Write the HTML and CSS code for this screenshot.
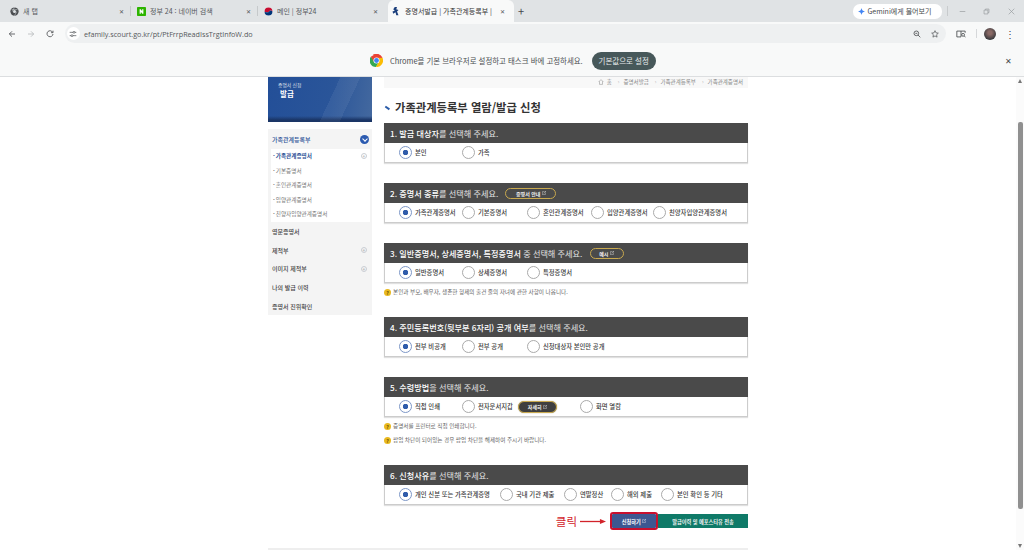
FILE: index.html
```html
<!DOCTYPE html>
<html lang="ko">
<head>
    <meta charset="UTF-8">
    <title>증명서발급 | 가족관계등록부</title>
    <link rel="stylesheet" href="styles.css">
</head>
<body>

    <div class="tabstrip">
        <div class="tab tab-sep">
            <svg class="favicon" viewBox="0 0 12 12"><circle cx="6" cy="6" r="5.5" fill="#4a4d50"/><circle cx="6" cy="6" r="2" fill="#dfe3e5"/><path d="M2 3.500h8M6 .5 3 6m3 5.500L9 6" stroke="#dfe3e5" stroke-width=".7" fill="none"/></svg>
            <span class="tab-title">새 탭</span>
            <span class="tab-close">✕</span>
        </div>
        <div class="tab tab-sep">
            <svg class="favicon" viewBox="0 0 12 12"><rect width="12" height="12" rx="1" fill="#2db400"/><path d="M3.500 3v6h1.600V6.200L7 9h1.500V3H6.900v2.800L5 3z" fill="#fff"/></svg>
            <span class="tab-title">정부 24 : 네이버 검색</span>
            <span class="tab-close">✕</span>
        </div>
        <div class="tab">
            <svg class="favicon" viewBox="0 0 12 12"><circle cx="6" cy="6" r="5.500" fill="#fff"/><path d="M.7 6a5.300 5.300 0 0 1 10.600 0c-1.500-2-3.500-1.500-4.500 0S2.500 7.500.7 6z" fill="#c60c30"/><path d="M.7 6c1.800 1.500 5.100 1.500 6.100 0s3-2 4.500 0A5.300 5.300 0 0 1 .7 6z" fill="#003478"/></svg>
            <span class="tab-title">메인 | 정부24</span>
            <span class="tab-close">✕</span>
        </div>
        <div class="tab tab-active">
            <svg class="favicon" viewBox="0 0 12 12"><path d="M5 0h3L7 3l3 1-2 2 2 5H7L6 7 3 9 2 6l3-1-2-2z" fill="#1c3f7c"/></svg>
            <span class="tab-title">증명서발급 | 가족관계등록부 |</span>
            <span class="tab-close">✕</span>
        </div>
        <span class="new-tab">+</span>
        <div class="tabstrip-right">
            <div class="gemini">
                <svg class="gemini-star" viewBox="0 0 12 12"><path d="M6 0c.5 3.500 2.500 5.500 6 6-3.500.5-5.500 2.500-6 6-.5-3.500-2.500-5.500-6-6 3.500-.5 5.500-2.500 6-6z" fill="#4285f4"/></svg>
                <span>Gemini에게 물어보기</span>
            </div>
            <span class="strip-divider"></span>
            <div class="window-buttons">
                <svg viewBox="0 0 10 10"><path d="M1 5h8" stroke="#9a9da0" fill="none"/></svg>
                <svg viewBox="0 0 10 10"><path d="M1.500 3h5.500v5.500H1.500zM3.500 3V1.500h5v5H7" stroke="#9a9da0" fill="none"/></svg>
                <svg viewBox="0 0 10 10"><path d="m1 1 8 8m0-8-8 8" stroke="#9a9da0" fill="none"/></svg>
            </div>
        </div>
    </div>

    <div class="toolbar">
        <svg class="nav-icon" viewBox="0 0 12 12"><path d="M10.500 6H2M6 2 2 6l4 4" stroke="#45484b" stroke-width="1.200" fill="none"/></svg>
        <svg class="nav-icon" viewBox="0 0 12 12"><path d="M1.500 6H10M6 2l4 4-4 4" stroke="#b4b7ba" stroke-width="1.200" fill="none"/></svg>
        <svg class="nav-icon" viewBox="0 0 12 12"><path d="M10 3.500A4.500 4.500 0 1 0 10.500 6M10.500 1v3h-3" stroke="#45484b" stroke-width="1.200" fill="none"/></svg>
        <div class="omnibox">
            <span class="site-info">
                <svg viewBox="0 0 12 12"><path d="M1 3.500h5M9 3.500h2M1 8.500h2M6 8.500h5" stroke="#45484b" fill="none"/><circle cx="7.500" cy="3.500" r="1.400" stroke="#45484b" fill="none"/><circle cx="4.500" cy="8.500" r="1.400" stroke="#45484b" fill="none"/></svg>
            </span>
            <span class="url">efamily.scourt.go.kr/pt/PtFrrpReadIssTrgtInfoW.do</span>
            <svg class="omni-icon" viewBox="0 0 12 12"><circle cx="5" cy="5" r="3.500" stroke="#45484b" stroke-width="1.200" fill="none"/><path d="m7.500 7.500 3.500 3.500M3.500 5h3" stroke="#45484b" stroke-width="1.200" fill="none"/></svg>
            <svg class="omni-icon" viewBox="0 0 12 12"><path d="m6 1 1.500 3.300 3.500.4-2.600 2.400.7 3.600L6 8.900l-3.100 1.800.7-3.600L1 4.700l3.500-.4z" stroke="#45484b" fill="none"/></svg>
        </div>
        <svg class="tool-icon" viewBox="0 0 12 12"><path d="M6 2.500H1v7h5M6 2.500h5v2M6 2.500v7" stroke="#45484b" fill="none"/><circle cx="8.500" cy="7" r="1.700" stroke="#45484b" fill="none"/><path d="m10 8.500 1.500 1.500" stroke="#45484b"/></svg>
        <span class="tool-divider"></span>
        <span class="avatar"></span>
        <span class="kebab">⋮</span>
    </div>

    <div class="infobar">
        <div class="infobar-center">
            <svg class="chrome-logo" viewBox="0 0 24 24">
                <path d="M12 12 5.500 1.500A12 12 0 0 1 23 7H12z" fill="#ea4335"/>
                <path d="M1.500 5A12 12 0 0 0 11 24l5-8-4-4z" fill="#34a853"/>
                <path d="M23 7a12 12 0 0 1-12 17l5.500-9.500L12 7z" fill="#fbbc05"/>
                <path d="M12 2a12 12 0 0 0-10.500 3L7 14l5-7h11a12 12 0 0 0-11-5z" fill="#ea4335"/>
                <circle cx="12" cy="12" r="5.600" fill="#fff"/>
                <circle cx="12" cy="12" r="4.400" fill="#4285f4"/>
            </svg>
            <span class="infobar-text">Chrome을 기본 브라우저로 설정하고 태스크 바에 고정하세요.</span>
            <span class="infobar-btn">기본값으로 설정</span>
        </div>
        <span class="infobar-close">✕</span>
    </div>

    <div class="viewport">
        <div class="page">
            <div class="sidebar">
                <div class="banner">
                    <span class="banner-small">증명서 신청</span>
                    <span class="banner-big">발급</span>
                </div>
                <div class="side-menu">
                    <div class="side-item side-open">가족관계등록부<span class="side-toggle"></span></div>
                    <div class="side-sub">
                        <div class="sub-item sub-current">가족관계증명서<span class="plus">+</span></div>
                        <div class="sub-item">기본증명서</div>
                        <div class="sub-item">혼인관계증명서</div>
                        <div class="sub-item">입양관계증명서</div>
                        <div class="sub-item">친양자입양관계증명서</div>
                    </div>
                    <div class="side-item">영문증명서</div>
                    <div class="side-item">제적부<span class="plus">+</span></div>
                    <div class="side-item">이미지 제적부<span class="plus">+</span></div>
                    <div class="side-item">나의 발급 이력</div>
                    <div class="side-item">증명서 진위확인</div>
                </div>
            </div>

            <div class="content">
                <div class="breadcrumb">
                    <svg class="home-icon" viewBox="0 0 10 10"><path d="M1 5 5 1l4 4M2.500 4v5h5V4" stroke="#999" fill="none"/></svg>
                    <span>홈</span>
                    <span class="crumb">증명서발급</span>
                    <span class="crumb">가족관계등록부</span>
                    <span class="crumb">가족관계증명서</span>
                </div>
                <h1 class="page-title"><span class="title-mark"></span>가족관계등록부 열람/발급 신청</h1>

                <section class="step step-1">
                    <h2 class="step-head"><b>1. 발급 대상자</b>를 선택해 주세요.</h2>
                    <div class="options">
                        <label class="opt w1 on">본인</label>
                        <label class="opt">가족</label>
                    </div>
                </section>

                <section class="step step-2">
                    <h2 class="step-head"><b>2. 증명서 종류</b>를 선택해 주세요. <span class="pill">증명서 안내<svg class="ext" viewBox="0 0 6 6"><path d="M3 1H.5v4.500H5V3M2.500 3.500 5.500.5M3.500.5h2v2" stroke="currentColor" stroke-width=".6" fill="none"/></svg></span></h2>
                    <div class="options">
                        <label class="opt wa on">가족관계증명서</label>
                        <label class="opt wb">기본증명서</label>
                        <label class="opt wc">혼인관계증명서</label>
                        <label class="opt wd">입양관계증명서</label>
                        <label class="opt">친양자입양관계증명서</label>
                    </div>
                </section>

                <section class="step step-3">
                    <h2 class="step-head"><b>3. 일반증명서, 상세증명서, 특정증명서</b> 중 선택해 주세요. <span class="pill pill-small">예시<svg class="ext" viewBox="0 0 6 6"><path d="M3 1H.5v4.500H5V3M2.500 3.500 5.500.5M3.500.5h2v2" stroke="currentColor" stroke-width=".6" fill="none"/></svg></span></h2>
                    <div class="options">
                        <label class="opt w1 on">일반증명서</label>
                        <label class="opt w2">상세증명서</label>
                        <label class="opt">특정증명서</label>
                    </div>
                </section>
                <p class="note">본인과 부모, 배우자, 생존한 형제의 출건 줄의 자녀에 관한 사항이 나옵니다.</p>

                <section class="step step-4">
                    <h2 class="step-head"><b>4. 주민등록번호(뒷부분 6자리) 공개 여부</b>를 선택해 주세요.</h2>
                    <div class="options">
                        <label class="opt w1 on">전부 비공개</label>
                        <label class="opt w2">전부 공개</label>
                        <label class="opt">신청대상자 본인만 공개</label>
                    </div>
                </section>

                <section class="step step-5">
                    <h2 class="step-head"><b>5. 수령방법</b>을 선택해 주세요.</h2>
                    <div class="options">
                        <label class="opt w1 on">직접 인쇄</label>
                        <label class="opt we">전자문서지갑</label>
                        <span class="pill pill-dark">자세히<svg class="ext" viewBox="0 0 6 6"><path d="M3 1H.5v4.500H5V3M2.500 3.500 5.500.5M3.500.5h2v2" stroke="currentColor" stroke-width=".6" fill="none"/></svg></span>
                        <label class="opt">화면 열람</label>
                    </div>
                </section>
                <p class="note">증명서를 프린터로 직접 인쇄합니다.</p>
                <p class="note">팝업 차단이 되어있는 경우 팝업 차단을 해제하여 주시기 바랍니다.</p>

                <section class="step step-6">
                    <h2 class="step-head"><b>6. 신청사유</b>를 선택해 주세요.</h2>
                    <div class="options">
                        <label class="opt on wf">개인 신분 또는 가족관계증명</label>
                        <label class="opt wg">국내 기관 제출</label>
                        <label class="opt wh">연말정산</label>
                        <label class="opt wi">해외 제출</label>
                        <label class="opt">본인 확인 등 기타</label>
                    </div>
                </section>

                <div class="actions">
                    <span class="click-label">클릭</span>
                    <svg class="click-arrow" viewBox="0 0 30 8"><path d="M0 4h24" stroke="#d2232a" stroke-width="1.500"/><path d="m23 1 7 3-7 3z" fill="#d2232a"/></svg>
                    <span class="btn-apply">신청하기<svg class="ext" viewBox="0 0 6 6"><path d="M3 1H.5v4.500H5V3M2.500 3.500 5.500.5M3.500.5h2v2" stroke="currentColor" stroke-width=".6" fill="none"/></svg></span>
                    <span class="btn-send">발급이력 및 에포스티유 전송</span>
                </div>
            </div>
        </div>
        <div class="footer-line"></div>
        <div class="scrollbar">
            <span class="scroll-up"></span>
            <span class="scroll-thumb"></span>
            <span class="scroll-down"></span>
        </div>
    </div>

</body>
</html>
```

FILE: styles.css
```css
* {
    box-sizing: border-box;
}
html, body {
    margin: 0;
    width: 1024px;
    height: 550px;
    overflow: hidden;
}
body {
    font-family: "Noto Sans CJK KR", "Noto Sans", sans-serif;
    color: #333;
    background: #fff;
}

/* browser chrome */
.tabstrip {
    height: 22px;
    background: #e0e3e5;
    display: flex;
    align-items: center;
    padding-left: 3px;
}
.tab {
    width: 127px;
    height: 22px;
    display: flex;
    align-items: center;
    gap: 4px;
    padding: 0 6px 0 7px;
    font-size: 7px;
    color: #55585b;
    position: relative;
}
.tab-sep::after {
    content: "";
    position: absolute;
    right: -1px;
    top: 6px;
    width: 1px;
    height: 10px;
    background: #c6c9cb;
}
.tab-active {
    width: 126px;
    margin-left: 4px;
    padding: 0 9px 0 3px;
    gap: 5px;
    background: #f8f9f9;
    border-radius: 6px 6px 0 0;
    color: #333;
}
.favicon {
    width: 9px;
    height: 9px;
    flex: none;
}
.tab-title {
    flex: 1;
    white-space: nowrap;
    overflow: hidden;
}
.tab-close {
    font-size: 6px;
    color: #55585b;
}
.new-tab {
    margin-left: 4px;
    font-size: 11px;
    color: #45484b;
}
.tabstrip-right {
    margin-left: auto;
    display: flex;
    align-items: center;
}
.gemini {
    width: 89px;
    height: 15px;
    background: #fff;
    border-radius: 7px;
    display: flex;
    align-items: center;
    gap: 3px;
    padding-left: 5px;
    font-size: 7px;
    color: #45484b;
    white-space: nowrap;
}
.gemini-star {
    width: 7px;
    height: 7px;
}
.strip-divider {
    width: 1px;
    height: 10px;
    background: #c8cbcd;
    margin: 0 11px 0 5px;
}
.window-buttons {
    display: flex;
    gap: 17.500px;
    padding-right: 9.500px;
}
.window-buttons svg {
    width: 7px;
    height: 7px;
}
.toolbar {
    height: 23px;
    background: #f8f9f9;
    display: flex;
    align-items: center;
    padding-left: 8px;
}
.nav-icon {
    width: 8px;
    height: 8px;
    margin-right: 11px;
}
.omnibox {
    flex: 1;
    height: 19px;
    background: #eef0f1;
    border-radius: 10px;
    display: flex;
    align-items: center;
    padding-left: 1.500px;
}
.site-info {
    width: 13px;
    height: 13px;
    background: #fff;
    border-radius: 50%;
    display: flex;
    align-items: center;
    justify-content: center;
}
.site-info svg {
    width: 8px;
    height: 8px;
}
.url {
    margin-left: 4.500px;
    font-family: "Open Sans", sans-serif;
    font-size: 7.200px;
    color: #55585b;
    flex: 1;
}
.omni-icon {
    width: 8px;
    height: 8px;
    margin: 0 7px 0 3px;
}
.tool-icon {
    width: 10px;
    height: 10px;
    margin-left: 10px;
}
.tool-divider {
    width: 1px;
    height: 9px;
    background: #d6d8da;
    margin: 0 7.500px 0 10px;
}
.avatar {
    width: 12px;
    height: 12px;
    border-radius: 50%;
    background: radial-gradient(circle at 50% 40%, #8a6a66 20%, #33363a 75%);
}
.kebab {
    width: 28px;
    text-align: center;
    font-size: 10px;
    color: #45484b;
}
.infobar {
    height: 32px;
    background: #f8f9f9;
    border-bottom: 1px solid #dcdee0;
    display: flex;
    align-items: center;
}
.infobar-center {
    display: flex;
    align-items: center;
    margin-left: 370px;
}
.chrome-logo {
    width: 13px;
    height: 13px;
    margin-right: 7px;
}
.infobar-text {
    font-size: 7.450px;
    color: #4a4d50;
    white-space: nowrap;
}
.infobar-btn {
    margin-left: 9px;
    width: 64px;
    height: 18px;
    border-radius: 9px;
    background: #47585a;
    color: #e8eced;
    font-size: 7.500px;
    display: flex;
    align-items: center;
    justify-content: center;
}
.infobar-close {
    margin-left: auto;
    margin-right: 12px;
    font-size: 7.500px;
    color: #45484b;
}

/* page */
.viewport {
    position: relative;
    height: 473px;
    overflow: hidden;
}
.page {
    width: 480px;
    margin-left: 268px;
    display: flex;
}
.sidebar {
    width: 104px;
    flex: none;
    margin-right: 12px;
}
.banner {
    height: 45px;
    background:
        linear-gradient(115deg, transparent 58%, rgba(255, 255, 255, .06) 58% 74%, transparent 74%),
        linear-gradient(to top, #1a3566 0, #1a3566 2px, transparent 6px),
        linear-gradient(100deg, #234f98, #2a5599 60%, #44699f);
    color: #fff;
    display: flex;
    flex-direction: column;
    padding: 3.500px 0 0 10px;
}
.banner-small {
    font-size: 4.800px;
    line-height: 7px;
    opacity: .85;
}
.banner-big {
    font-size: 7.500px;
    line-height: 10px;
    font-weight: 700;
    margin: 1.500px 0 0 2px;
}
.side-menu {
    margin-top: 7px;
    background: #f4f4f4;
}
.side-item {
    height: 18.700px;
    display: flex;
    align-items: center;
    justify-content: space-between;
    padding: 0 5px 0 4px;
    font-size: 6px;
    font-weight: 500;
    color: #444;
}
.side-open {
    height: 20px;
    color: #2a4f95;
    padding-right: 3.500px;
}
.side-toggle {
    width: 9px;
    height: 9px;
    border-radius: 50%;
    background: #2c5bb0;
    position: relative;
}
.side-toggle::after {
    content: "";
    position: absolute;
    left: 3px;
    top: 2px;
    width: 3px;
    height: 3px;
    border-right: 1px solid #fff;
    border-bottom: 1px solid #fff;
    transform: rotate(45deg);
}
.side-sub {
    background: #fff;
    margin: 0 2px 0 3px;
    height: 73px;
}
.sub-item {
    height: 14.500px;
    display: flex;
    align-items: center;
    padding: 0 3px 0 2px;
    font-size: 5.600px;
    color: #777;
}
.sub-item::before {
    content: "·";
    margin-right: 1px;
    font-weight: 700;
}
.sub-item.sub-current {
    color: #2a4f95;
    font-weight: 700;
}
.plus {
    margin-left: auto;
    width: 6px;
    height: 6px;
    border: 1px solid #c9cdd3;
    border-radius: 50%;
    font-size: 5px;
    line-height: 4px;
    text-align: center;
    color: #8a8f96;
    font-weight: 400;
}
.content {
    width: 364px;
    flex: none;
}
.breadcrumb {
    height: 11px;
    background: #f8f8f8;
    padding: 1px 5px 0 0;
    font-size: 5.500px;
    color: #888;
    display: flex;
    justify-content: flex-end;
    gap: 3px;
    line-height: 8px;
}
.home-icon {
    width: 6px;
    height: 6px;
    margin-top: 1px;
}
.crumb {
    margin-left: 3px;
}
.crumb::before {
    content: "›";
    margin-right: 4px;
    color: #aaa;
}
.page-title {
    margin: 11px 0 0;
    height: 16px;
    font-size: 11.300px;
    line-height: 16px;
    font-weight: 700;
    color: #333;
    display: flex;
    align-items: center;
}
.title-mark {
    width: 5px;
    height: 1.500px;
    background: #2a5ba8;
    transform: rotate(35deg);
    margin: 1px 5px 0 1px;
}
.step {
    border: 1px solid #ccc;
    border-top: none;
    box-shadow: 0 1px 1px rgba(0, 0, 0, .12);
    background: #fff;
}
.step-1 { margin-top: 8px; }
.step-2 { margin-top: 20px; }
.step-3 { margin-top: 20px; }
.step-4 { margin-top: 21px; }
.step-5 { margin-top: 20px; }
.step-6 { margin-top: 21px; }
.step-head {
    margin: 0 -1px;
    height: 20px;
    background: #4a4a4a;
    color: #e2e2e2;
    font-size: 8.150px;
    font-weight: 400;
    display: flex;
    align-items: center;
    padding-left: 6px;
    white-space: pre;
}
.step-head b {
    font-weight: 500;
    color: #fff;
}
.pill {
    margin-left: 5px;
    height: 11px;
    width: 51px;
    border: 1px solid #c9a94f;
    border-radius: 6px;
    background: #4a4a4a;
    color: #f2f2f2;
    font-size: 5px;
    font-weight: 700;
    display: inline-flex;
    align-items: center;
    justify-content: center;
}
.pill-small {
    width: 34px;
}
.pill-dark {
    margin-left: 0;
    width: 39px;
    height: 12px;
    margin-right: 23px;
    border-width: 1.500px;
    background: #3f3f3f;
    box-shadow: 0 0 1px #8a7a3a;
}
.ext {
    width: 4px;
    height: 4px;
    margin-left: 1.500px;
}
.options {
    height: 19px;
    display: flex;
    align-items: center;
    padding-left: 14px;
}
.opt {
    display: flex;
    align-items: center;
    font-size: 6.300px;
    font-weight: 500;
    color: #3a3a3a;
    white-space: nowrap;
}
.opt::before {
    content: "";
    width: 11px;
    height: 11px;
    margin-right: 3px;
    border: 1px solid #aaa;
    border-radius: 50%;
    background: #fff;
}
.opt.on::before {
    border-color: #7d97c7;
    background: radial-gradient(circle, #2f5cab 0 2.500px, #fff 3px);
}
.w1 { width: 63px; }
.w2 { width: 65px; }
.wa { width: 63px; }
.wb { width: 65px; }
.wc { width: 64px; }
.wd { width: 62px; }
.we { width: 51px; flex: none; margin-right: 5px; }
.wf { width: 101px; }
.wg { width: 64px; }
.wh { width: 47px; }
.wi { width: 50px; }
.note {
    margin: 5px 0 0;
    height: 8px;
    display: flex;
    align-items: center;
    font-size: 5.600px;
    line-height: 8px;
    color: #666;
    white-space: nowrap;
}
.note + .note {
    margin-top: 6px;
}
.note::before {
    content: "?";
    width: 7px;
    height: 7px;
    margin-right: 2px;
    border-radius: 50%;
    background: #e9b91f;
    color: #5a4500;
    font-size: 5px;
    font-weight: 700;
    line-height: 7px;
    text-align: center;
}
.actions {
    margin-top: 9px;
    height: 14px;
    display: flex;
    align-items: center;
    justify-content: flex-end;
}
.click-label {
    font-size: 11.500px;
    line-height: 14px;
    color: #d2232a;
    margin-right: 3px;
}
.click-arrow {
    width: 26px;
    height: 7px;
    margin-right: 6px;
}
.btn-apply {
    width: 44px;
    height: 14px;
    background: #3d5791;
    outline: 2px solid #c8102e;
    border-radius: 1px;
    color: #fff;
    font-size: 5.200px;
    font-weight: 700;
    display: flex;
    align-items: center;
    justify-content: center;
}
.btn-send {
    width: 90px;
    height: 14px;
    background: #0f7a68;
    color: #f2f2f2;
    font-size: 5.200px;
    font-weight: 700;
    display: flex;
    align-items: center;
    justify-content: center;
    margin-left: 2px;
}
.footer-line {
    position: absolute;
    left: 268px;
    top: 471px;
    width: 480px;
    height: 2px;
    background: #eee;
}
.scrollbar {
    position: absolute;
    right: 0;
    top: 0;
    width: 8px;
    height: 473px;
    background: #fbfbfb;
}
.scroll-thumb {
    position: absolute;
    left: 1.500px;
    top: 45px;
    width: 5px;
    height: 387px;
    border-radius: 2px;
    background: #909090;
}
.scroll-up,
.scroll-down {
    position: absolute;
    left: 1.500px;
    width: 0;
    height: 0;
    border-left: 2.500px solid transparent;
    border-right: 2.500px solid transparent;
}
.scroll-up {
    top: 2px;
    border-bottom: 4px solid #777;
}
.scroll-down {
    top: 467px;
    border-top: 4px solid #777;
}
```
